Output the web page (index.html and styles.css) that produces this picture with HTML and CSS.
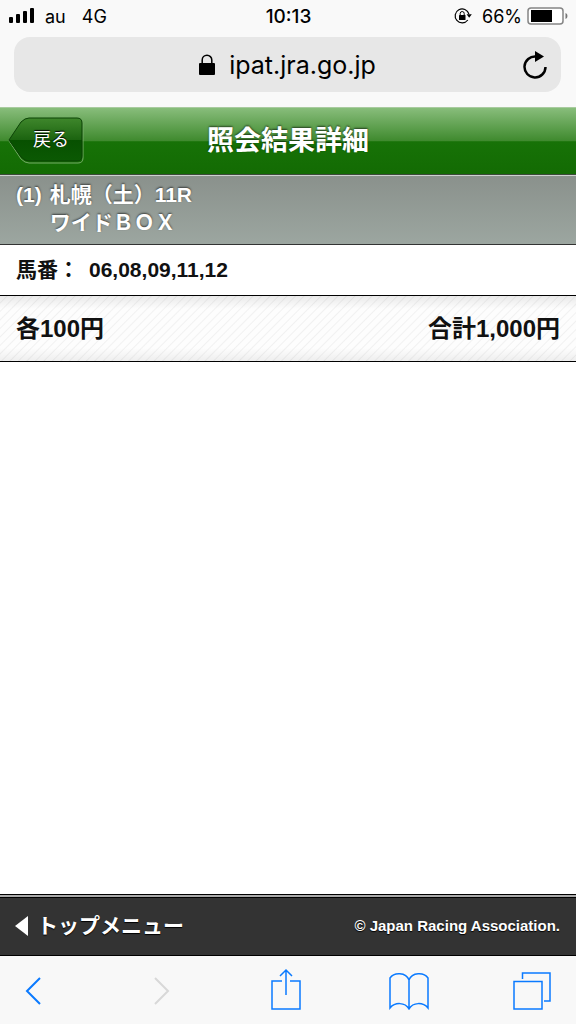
FILE: index.html
```html
<!DOCTYPE html>
<html lang="ja">
<head>
    <meta charset="utf-8">
    <meta name="viewport" content="width=device-width, initial-scale=1">
    <title>照会結果詳細</title>
    <link rel="stylesheet" href="styles.css">
</head>
<body>
    <div class="browser-top">
        <div class="status-bar">
            <div class="status-left">
                <svg class="signal" width="26" height="16" viewBox="0 0 26 16">
                    <rect x="0" y="9" width="4" height="6" rx="1"/>
                    <rect x="7" y="6" width="4" height="9" rx="1"/>
                    <rect x="14" y="3" width="4" height="12" rx="1"/>
                    <rect x="21" y="0" width="4" height="15" rx="1"/>
                </svg>
                <span class="carrier">au</span>
                <span>4G</span>
            </div>
            <div class="clock">10:13</div>
            <div class="status-right">
                <svg class="rotation-lock" width="18" height="18" viewBox="0 0 18 18">
                    <path d="M13.800 13A7 7 0 1 1 14.900 7" fill="none" stroke="#000" stroke-width="1.200"/>
                    <path d="M12.600 7.300h5.200l-2.600 3.400z"/>
                    <rect x="5" y="8" width="6.500" height="5" rx=".5"/>
                    <path d="M6.200 8V6.500a2 2 0 0 1 4 0V8" fill="none" stroke="#000"/>
                </svg>
                <span>66%</span>
                <svg class="battery" width="41" height="18" viewBox="0 0 41 18">
                    <rect x="1" y="1" width="35" height="16" rx="3" fill="#fff" stroke="#858585" stroke-width="1.500"/>
                    <rect x="4" y="3" width="21" height="12"/>
                    <path d="M38.500 6q2 .5 2 3t-2 3z" fill="#777"/>
                </svg>
            </div>
        </div>
        <div class="address-bar">
            <span class="address">
                <svg width="16" height="22" viewBox="0 0 16 22">
                    <rect x="0" y="9" width="16" height="12" rx="1"/>
                    <path d="M3.200 10V6a4.800 4.800 0 0 1 9.600 0v4" fill="none" stroke="#000" stroke-width="1.500"/>
                </svg>
                <span>ipat.jra.go.jp</span>
            </span>
            <button class="reload-btn" type="button" aria-label="再読み込み">
                <svg width="24" height="28" viewBox="0 0 24 28">
                    <path d="M22.500 16A10.500 10.500 0 1 1 13 5.500" fill="none" stroke="#000" stroke-width="2.500"/>
                    <path d="M12 0v11l9-5.500z"/>
                </svg>
            </button>
        </div>
    </div>

    <header class="page-header">
        <button class="back-btn" type="button">
            <svg class="back-shape" width="76" height="48" viewBox="0 0 76 48">
                <defs>
                    <linearGradient id="back-fill" x1="0" y1="0" x2="0" y2="1">
                        <stop offset="0" stop-color="#3f872c"/>
                        <stop offset=".5" stop-color="#1c6410"/>
                        <stop offset=".51" stop-color="#075000"/>
                        <stop offset="1" stop-color="#0b5903"/>
                    </linearGradient>
                </defs>
                <path d="M1 24 13 6Q17 2 21 2H70q5 0 5 5V41q0 5-5 5H21q-4 0-8-4z" fill="none" stroke="#74ab66" stroke-width="1"/>
                <path d="M1 23 13 5Q17 1 21 1H69q5 0 5 5V39q0 5-5 5H21q-4 0-8-4z" fill="url(#back-fill)" stroke="#0b4305" stroke-width="1"/>
            </svg>
            <span class="back-label">戻る</span>
        </button>
        <h1>照会結果詳細</h1>
    </header>

    <main>
        <h2 class="race">
            <span>(1)</span>
            <span>札幌（土）11R<br>ワイドＢＯＸ</span>
        </h2>
        <div class="horses">
            <span>馬番：</span>
            <span>06,08,09,11,12</span>
        </div>
        <div class="amount">
            <span>各100円</span>
            <span>合計1,000円</span>
        </div>
    </main>

    <footer class="page-footer">
        <a href="#" class="top-menu">
            <svg width="13" height="20" viewBox="0 0 13 20"><path d="M0 10 13 0v20z" fill="#fff"/></svg>
            <span>トップメニュー</span>
        </a>
        <small>© Japan Racing Association.</small>
    </footer>

    <nav class="toolbar">
        <button type="button" class="nav-back" aria-label="前のページ">
            <svg width="16" height="28" viewBox="0 0 16 28"><path class="chevron" d="M15 1 2 14l13 13"/></svg>
        </button>
        <button type="button" aria-label="次のページ" disabled>
            <svg width="16" height="28" viewBox="0 0 16 28"><path class="chevron" d="M1 1l13 13L1 27"/></svg>
        </button>
        <button type="button" aria-label="共有">
            <svg width="30" height="46" viewBox="0 0 30 46">
                <path d="M11 13H1v28h28V13H19M15 27V2M9 8l6-6 6 6"/>
            </svg>
        </button>
        <button type="button" aria-label="ブックマーク">
            <svg width="40" height="38" viewBox="0 0 40 38">
                <path d="M20 8C17 0 5 0 1 6v30c5-6 15-6 19 1 4-7 14-7 19-1V6C35 0 23 0 20 8zV37"/>
            </svg>
        </button>
        <button type="button" aria-label="タブ">
            <svg width="38" height="38" viewBox="0 0 38 38">
                <path d="M1 9.500H29V37H1zM9.500 7V1H37V29H31"/>
            </svg>
        </button>
    </nav>
</body>
</html>
```
FILE: styles.css
```css
* {
    box-sizing: border-box;
}
body {
    margin: 0;
    min-height: 100vh;
    display: flex;
    flex-direction: column;
    background: #fff;
    color: #111;
    font-family: "Liberation Sans", "Noto Sans CJK JP", sans-serif;
}
button {
    display: flex;
    align-items: center;
    justify-content: center;
    padding: 0;
    border: none;
    background: none;
    font-family: inherit;
    cursor: pointer;
}
svg {
    display: block;
    flex: none;
}

/* Browser bars */
.browser-top {
    padding: 0 15px 15px 14px;
    background: #f9f9f9;
    color: #000;
    font-family: Inter, sans-serif;
}
.status-bar {
    display: grid;
    grid-template-columns: 1fr auto 1fr;
    align-items: center;
    height: 32px;
    margin: 0 -7px 5px -5px;
    font-size: 18px;
}
.status-left,
.status-right {
    display: flex;
    align-items: center;
}
.status-right {
    justify-content: flex-end;
}
.carrier {
    margin: 0 16px 0 10px;
}
.clock {
    font-size: 19px;
    font-weight: 500;
}
.rotation-lock {
    margin-right: 10px;
}
.battery {
    margin-left: 5px;
}
.address-bar {
    display: grid;
    grid-template-columns: 1fr auto 1fr;
    align-items: center;
    height: 55px;
    padding: 0 14px;
    border-radius: 16px;
    background: #e7e7e7;
    font-size: 25px;
}
.address {
    grid-column: 2;
    display: flex;
    align-items: center;
    gap: 14px;
}
.reload-btn {
    justify-self: end;
}

/* Page header */
.page-header {
    display: grid;
    grid-template-columns: 1fr auto 1fr;
    align-items: center;
    height: 68px;
    padding: 0 8px;
    border-top: 1px solid #a9cb9f;
    border-bottom: 1px solid #3c493a;
    background: linear-gradient(#88bd7b, #3f8a2e 50%, #177207 51%, #136b03);
    color: #fff;
}
.page-header h1 {
    margin: 0;
    font-size: 27px;
    line-height: 40px;
    text-shadow: 0 -1px 2px rgba(0, 0, 0, 0.6);
}
.back-btn {
    position: relative;
    justify-self: start;
    width: 76px;
    height: 48px;
    padding-left: 10px;
    color: #fff;
    font-size: 18px;
}
.back-shape {
    position: absolute;
    inset: 0;
}
.back-label {
    position: relative;
    padding-bottom: 6px;
    text-shadow: 0 -1px 1px #000;
}

/* Bet details */
main {
    flex: 1;
    font-weight: bold;
}
.race {
    display: flex;
    gap: 8px;
    margin: 0;
    padding: 5px 16px 7px;
    border-top: 1px solid #cdd2cf;
    border-bottom: 1px solid #333;
    background: linear-gradient(#8a918c, #9ca6a0);
    color: #fff;
    font-size: 21px;
    line-height: 28px;
    text-shadow: 0 -1px 2px rgba(0, 0, 0, 0.6);
}
.horses {
    display: flex;
    gap: 10px;
    padding: 10px 16px;
    border-bottom: 1px solid #000;
    font-size: 21px;
    line-height: 30px;
}
.amount {
    display: flex;
    justify-content: space-between;
    padding: 16px;
    border-bottom: 1px solid #000;
    background:
        linear-gradient(rgba(0, 0, 0, 0.08), transparent 20%, transparent 80%, rgba(0, 0, 0, 0.06)),
        repeating-linear-gradient(135deg, #fdfdfd 0, #fdfdfd 4px, #f1f1f1 5px, #fdfdfd 6px);
    font-size: 24px;
    line-height: 33px;
}

/* Page footer */
.page-footer {
    display: flex;
    align-items: center;
    justify-content: space-between;
    height: 62px;
    padding: 0 16px 2px 15px;
    border-top: 4px double #000;
    border-bottom: 1px solid #000;
    background: #333 linear-gradient(#aaa, #aaa) border-box top / 100% 4px no-repeat;
    color: #fff;
    font-weight: bold;
    text-shadow: 0 1px 1px #000;
}
.top-menu {
    display: flex;
    align-items: center;
    gap: 9px;
    color: inherit;
    font-size: 21px;
    line-height: 30px;
    text-decoration: none;
}
.page-footer small {
    font-size: 15px;
}

/* Bottom toolbar */
.toolbar {
    display: flex;
    align-items: center;
    justify-content: space-between;
    height: 68px;
    padding: 2px 24px 0 19px;
    background: #f8f8f8;
}
.toolbar button {
    width: 40px;
    color: #0a7aff;
}
.toolbar .nav-back {
    padding-right: 12px;
}
.toolbar button:disabled {
    color: #d8d8d8;
}
.toolbar path {
    fill: none;
    stroke: currentColor;
    stroke-width: 1.5;
}
.toolbar .chevron {
    stroke-width: 2;
}
```
